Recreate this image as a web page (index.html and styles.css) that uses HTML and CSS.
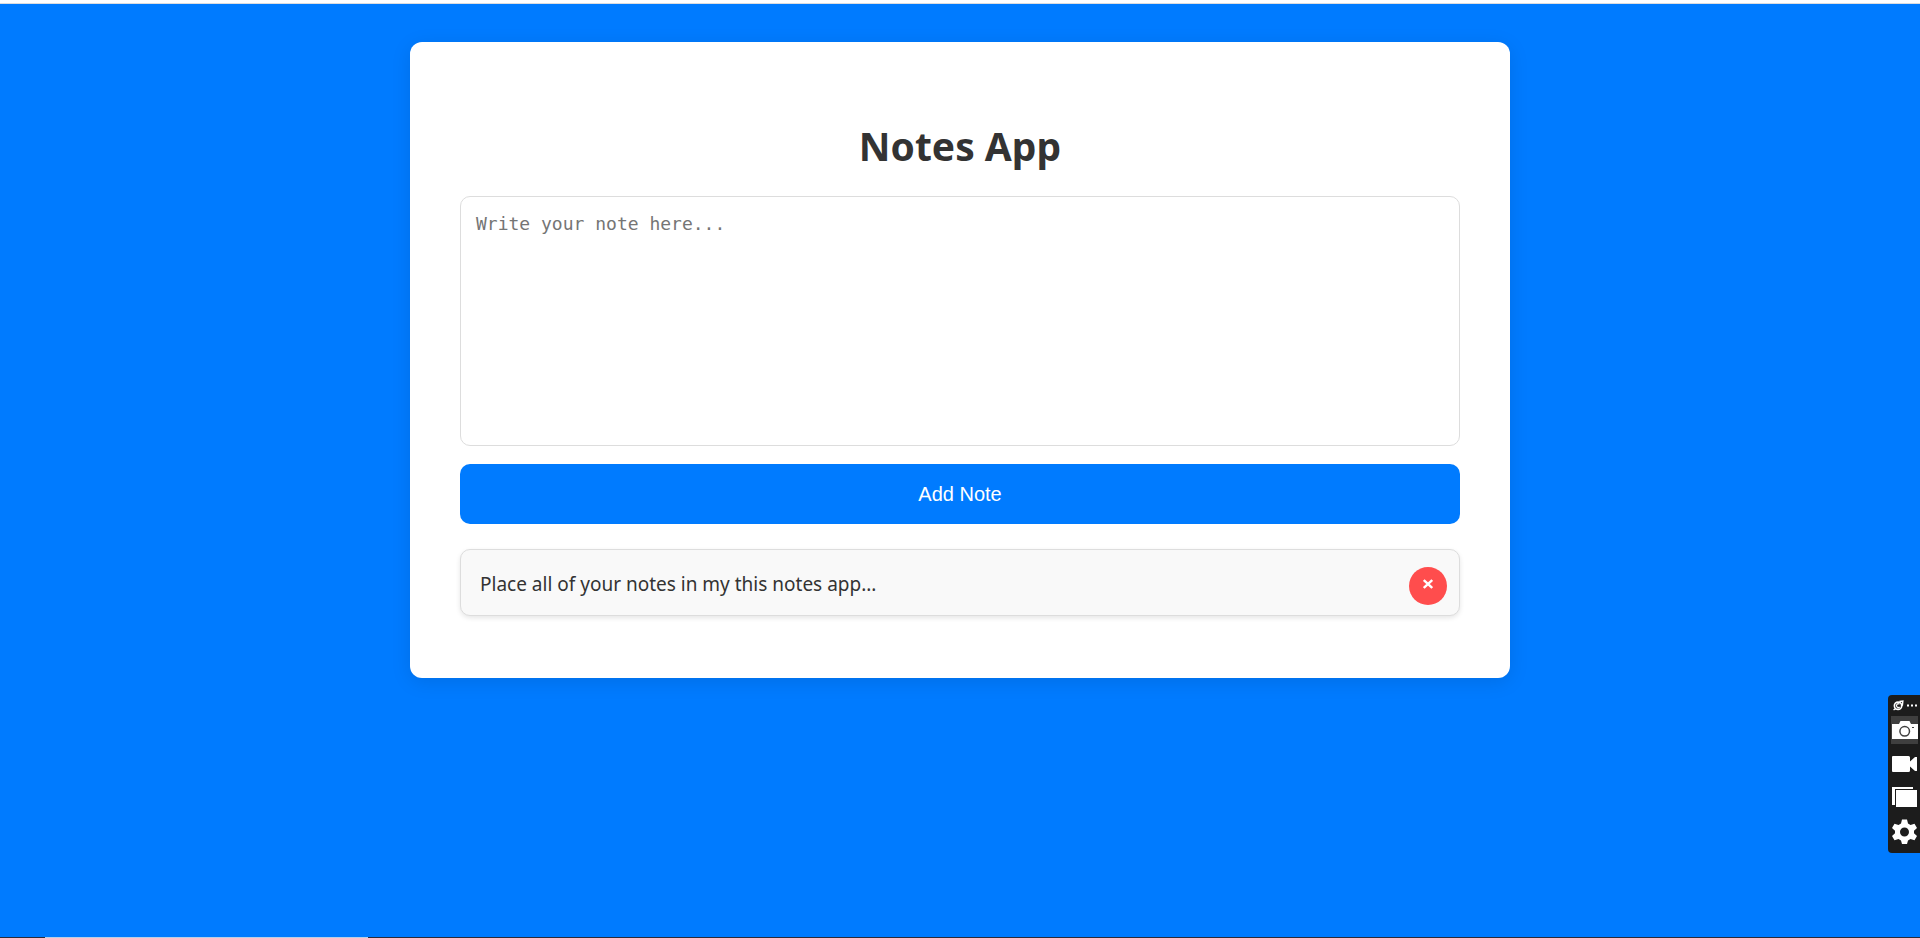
FILE: index.html
```html
<!DOCTYPE html>
<html lang="en">
<head>
<meta charset="utf-8">
<title>Notes App</title>
<link rel="stylesheet" href="styles.css">
</head>
<body>
<div class="top-edge"></div>
<main class="page">
  <section class="card">
    <h1 class="title">Notes App</h1>
    <textarea class="note-input" aria-label="New note" placeholder="Write your note here..."></textarea>
    <button class="add-button" type="button">Add Note</button>
    <ul class="notes">
      <li class="note">
        <span class="note-text">Place all of your notes in my this notes app...</span>
        <button class="delete-button" type="button" aria-label="Delete note">
          <svg class="cross" viewBox="0 0 10 10" aria-hidden="true"><path d="M.8 1 9.200 9M9.200 1 .8 9"/></svg>
        </button>
      </li>
    </ul>
  </section>
</main>
<div class="bottom-edge"><div class="bottom-tab"></div></div>
<aside class="recorder">
  <div class="recorder-head">
    <svg class="logo" viewBox="0 0 12 12" aria-hidden="true"><circle cx="5.5" cy="6.3" r="4" fill="none" stroke="#fff" stroke-width="1.8"/><path d="M7 4.6A2 2 0 1 0 7.2 7.6" fill="none" stroke="#fff" stroke-width="1.3"/><path d="M.6 10.8 3 9.500M7 1.500 10.800 1.200 10.300 5.500 9 7" fill="none" stroke="#fff" stroke-width="1.500"/></svg>
    <svg class="dots" viewBox="0 0 11 3" aria-hidden="true"><path fill="#fff" d="M0 .5h2v2H0zM4 .5h2v2H4zM8 .5h2v2H8z"/></svg>
  </div>
  <button class="tool tool-active" type="button" aria-label="Take screenshot">
    <svg viewBox="0 0 26 28" aria-hidden="true"><path fill="#fff" d="M0 8h7l1.500-3h9L19 8h7v15H0z"/><circle cx="12.700" cy="15.300" r="4.800" fill="#fff" stroke="#3f3f3f" stroke-width="1.500"/><path fill="#3f3f3f" d="M20 11h2v1h-2z"/></svg>
  </button>
  <button class="tool" type="button" aria-label="Record video">
    <svg viewBox="0 0 26 28" aria-hidden="true"><path fill="#fff" d="M1 6h15.500q1.500 0 1.500 1.500v4L23 7h2v14h-2l-5-4.500v4q0 1.500-1.500 1.500H1q-1 0-1-1V7q0-1 1-1z"/></svg>
  </button>
  <button class="tool" type="button" aria-label="Open gallery">
    <svg viewBox="0 0 26 28" aria-hidden="true"><path fill="#fff" d="M0 3h21v2H3v16H0zM4 6h21v17H4z"/></svg>
  </button>
  <button class="tool" type="button" aria-label="Settings">
    <svg viewBox="0 0 26 28" aria-hidden="true"><path fill="#fff" fill-rule="evenodd" d="M10 1.500h5l1 4 2.500 1.400 4-1.200 2.500 4.300-3 2.700v2.600l3 2.700-2.500 4.300-4-1.200L16 22.500l-1 3.400h-5l-1-3.400-2.500-1.400-4 1.200L0 18l3-2.700v-2.600L0 10l2.500-4.300 4 1.200L9 5.500zM12.500 9.500a4.500 4.500 0 1 0 0 9 4.500 4.500 0 0 0 0-9z"/></svg>
  </button>
</aside>
</body>
</html>
```
FILE: styles.css
```css
* {
  box-sizing: border-box;
}

body {
  margin: 0;
  min-height: 100vh;
  display: flex;
  flex-direction: column;
  background: #007bff;
  color: #333;
  font-family: "Segoe UI", "Noto Sans", sans-serif;
}

.top-edge {
  height: 4px;
  background: #fff;
  border-bottom: 1px solid #dadce0;
}

.page {
  flex: 1;
  padding: 38px 20px;
}

.card {
  max-width: 1100px;
  margin: 0 auto;
  padding: 76px 50px 62px;
  background: #fff;
  border-radius: 12px;
  box-shadow: 0 4px 20px rgba(0, 0, 0, 0.1);
}

.title {
  margin: 0 0 22px;
  font-size: 39px;
  line-height: 56px;
  font-weight: 700;
  text-align: center;
}

.note-input {
  display: block;
  width: 100%;
  height: 250px;
  padding: 15px;
  border: 1px solid #ddd;
  border-radius: 10px;
  background: #fff;
  font-family: Consolas, "DejaVu Sans Mono", monospace;
  font-size: 18px;
  line-height: 24px;
  resize: none;
}

.note-input::placeholder {
  color: #757575;
}

.add-button {
  display: block;
  width: 100%;
  height: 60px;
  margin-top: 18px;
  border: 0;
  border-radius: 10px;
  background: #007bff;
  color: #fff;
  font-family: "Liberation Sans", sans-serif;
  font-size: 20px;
}

.notes {
  margin: 25px 0 0;
  padding: 0;
  list-style: none;
}

.note {
  display: flex;
  align-items: flex-start;
  justify-content: space-between;
  padding: 17px 12px 10px 19px;
  border: 1px solid #ddd;
  border-radius: 10px;
  background: #f9f9f9;
  box-shadow: 0 2px 5px rgba(0, 0, 0, 0.1);
}

.note-text {
  font-size: 19px;
  line-height: 34px;
}

.delete-button {
  display: flex;
  justify-content: center;
  width: 38px;
  height: 38px;
  padding: 12px 0 0;
  border: 0;
  border-radius: 50%;
  background: #ff4d4d;
}

.cross {
  width: 10px;
  height: 10px;
  fill: none;
  stroke: #fff;
  stroke-width: 2.4;
}

.bottom-edge {
  height: 1px;
  padding-left: 45px;
  background: #2b2b3a;
}

.bottom-tab {
  width: 323px;
  height: 1px;
  background: #b9cfe6;
}

.recorder {
  position: fixed;
  right: 0;
  bottom: 85px;
  display: flex;
  flex-direction: column;
  gap: 6px;
  width: 32px;
  padding: 5px 2px 7px 3px;
  border-radius: 4px 0 0 4px;
  background: #1c1c1c;
}

.recorder-head {
  display: flex;
  align-items: center;
  justify-content: space-between;
  height: 10px;
  padding-left: 2px;
}

.logo {
  width: 11px;
  height: 11px;
}

.dots {
  width: 11px;
  height: 3px;
}

.tool {
  width: 27px;
  height: 28px;
  padding: 0 0 0 1px;
  border: 0;
  background: transparent;
}

.tool svg {
  display: block;
  width: 26px;
  height: 28px;
}

.tool-active {
  background: #3f3f3f;
}
```
